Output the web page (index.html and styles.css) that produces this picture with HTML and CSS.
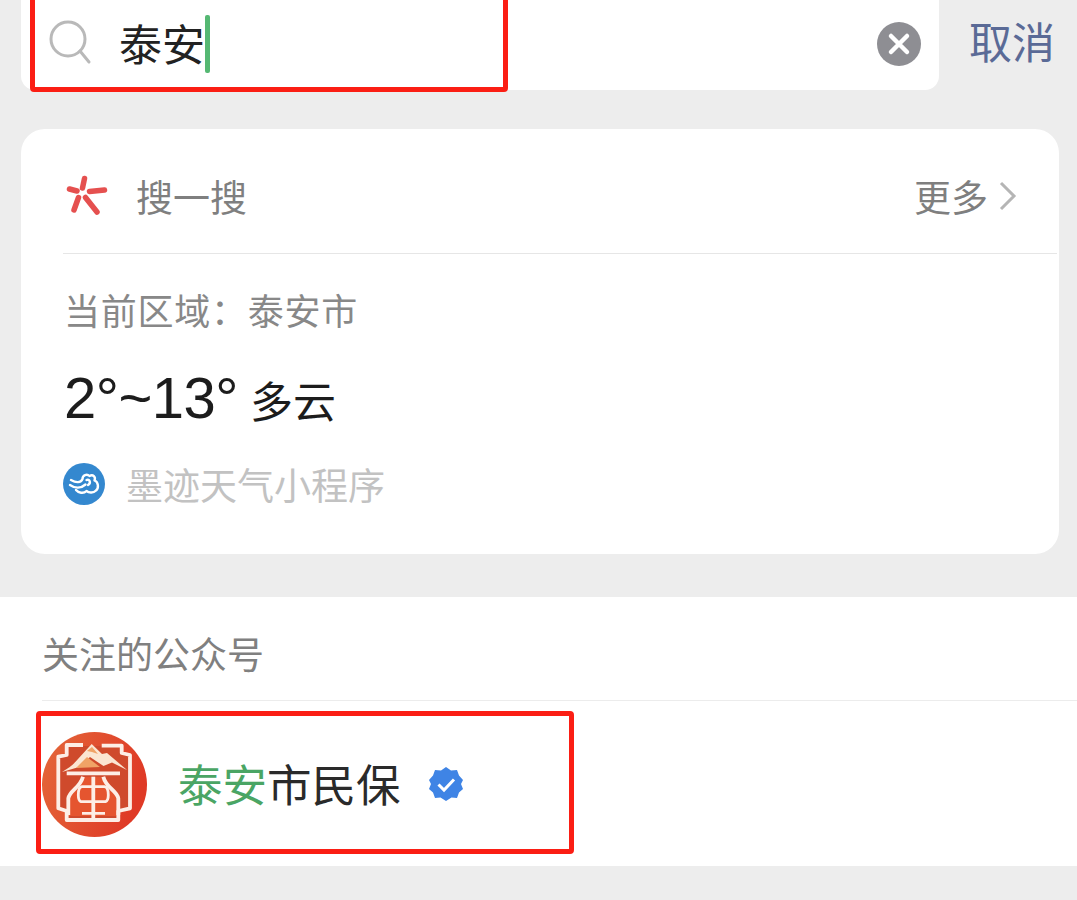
FILE: index.html
```html
<!DOCTYPE html>
<html lang="zh-CN">
<head>
<meta charset="utf-8">
<title>搜索</title>
<link rel="stylesheet" href="styles.css">
</head>
<body>
<div class="page">
  <header class="search-row">
    <div class="search-box">
      <svg class="search-icon" viewBox="0 0 46 46" width="46" height="46"><circle cx="22" cy="20" r="17" fill="none" stroke="#b9b9b9" stroke-width="3"/><path d="M34 32 L43 43" stroke="#b9b9b9" stroke-width="3" stroke-linecap="round"/></svg>
      <span class="query">泰安</span><span class="caret"></span>
      <svg class="clear-icon" viewBox="0 0 44 44" width="44" height="44"><circle cx="22" cy="22" r="22" fill="#8e8e93"/><path d="M14 14 L30 30 M30 14 L14 30" stroke="#fff" stroke-width="4.500" stroke-linecap="round"/></svg>
    </div>
    <span class="cancel">取消</span>
  </header>

  <section class="card">
    <div class="card-head">
      <svg class="sou-icon" viewBox="0 0 42 42" width="42" height="42"><g stroke="#e5504f" stroke-linecap="round" stroke-width="5.500"><path d="M18.500 3.500 L16.500 13"/><path d="M3.500 14 L11 16"/><path d="M23.500 16.500 L38.500 15"/><path d="M12.500 22.500 L8 35"/><path d="M19.500 22.500 L31 37"/></g></svg>
      <span class="card-title">搜一搜</span>
      <span class="more">更多</span>
      <svg class="chevron" viewBox="0 0 18 30" width="18" height="30"><path d="M2 2 L15 15 L2 28" fill="none" stroke="#b5b5b5" stroke-width="3"/></svg>
    </div>
    <div class="card-body">
      <div class="region">当前区域&#xFF1A;泰安市</div>
      <div class="weather"><span class="temp">2°~13°</span><span class="cond">多云</span></div>
      <div class="source">
        <svg class="moji-icon" viewBox="0 0 42 42" width="42" height="42"><circle cx="21" cy="21" r="21" fill="#3488cf"/><g fill="none" stroke="#fff" stroke-width="2.400" stroke-linecap="round" stroke-linejoin="round"><path d="M8 17 C13 20 18 20 19.500 16 C19.500 12 24 10.500 26.500 13 C30 11 33 14 31.500 17.500 C35.500 19 36 25 33 27.500 C30.500 30 26 30 23.500 28 C20.500 31 15.500 30 13 27"/><path d="M7 22 C12 25.500 18 25.500 22.500 21.500"/><path d="M23.500 17 C26.500 15.500 28.500 20 25 22"/></g></svg>
        <span class="source-name">墨迹天气小程序</span>
      </div>
    </div>
  </section>

  <section class="accounts">
    <div class="accounts-title">关注的公众号</div>
    <div class="account">
      <svg class="avatar" viewBox="0 0 105 105" width="105" height="105">
        <defs><linearGradient id="seal" x1="0" y1="0" x2="1" y2="0.300"><stop offset="0" stop-color="#e4683a"/><stop offset="1" stop-color="#df3a26"/></linearGradient></defs>
        <circle cx="52.500" cy="52.500" r="52.500" fill="url(#seal)"/>
        <path d="M25 14 H80 V22 L88 24 V76 L78 79 V88 H25 V79 L16 76 V25 L25 23 Z" fill="#cf4a2c"/>
        <path d="M41 45 H61 C64 55 72 60 76 67 V84 H26 V67 C31 60 38 55 41 45 Z" fill="#e5552f"/>
        <g fill="none" stroke="#fdeee6" stroke-width="3.800" stroke-linejoin="round">
          <path d="M41 13 H24.700 V23 L16.300 24.700 V76.300 L24.700 79 V88 H76.300 V79 L88 76.300 V23 L79.700 21 V13.700 H59.700"/>
          <path d="M24.700 41.300 H78"/>
          <path d="M41 44.700 C38 56 28 58 26.300 66.300 V83"/>
          <path d="M61.300 44.700 C64 56 74.500 58 76.300 66.300 V83"/>
          <path d="M51.300 44.700 V86"/>
        </g>
        <g fill="none" stroke="#fdeee6" stroke-width="2.800" stroke-linejoin="round">
          <path d="M51.300 54.700 H40 C37.500 55 36.300 59 36.300 63 C36.300 66 37 69 39 69.700 H51.300 M40 81.300 H51.300 M51.300 54.700 H62.500 C65 55 66.300 59 66.300 63 C66.300 66 65.500 69 63.500 69.700 H51.300 M51.300 81.300 H63"/>
        </g>
        <path d="M20 40 C27 36 32 32 36 27 L49.700 12 L60 22 L65 21 L85 38 L70 30.500 L61.500 34 L48 25 L37 35 Z" fill="#fbe6d2"/>
        <path d="M34 36 L45 25 L58 35 Z" fill="#f0a366"/>
        <path d="M45 19 L50 15 L56 22 L50 20 Z" fill="#f0a366"/>
      </svg>
      <div class="account-name"><em class="hit">泰安</em>市民保</div>
      <svg class="verified" viewBox="0 0 36 36" width="36" height="36"><path d="M18 1 L23 4.500 L29 4 L31 9.500 L35 14 L33 18 L35 23 L31 26.500 L29 32 L23.500 31.500 L18 35 L12.500 31.500 L7 32 L5 26.500 L1 23 L3 18 L1 14 L5 9.500 L7 4 L13 4.500 Z" fill="#3f84e5"/><path d="M10.500 18.500 L16 24 L26 13.500" fill="none" stroke="#fff" stroke-width="3"/></svg>
    </div>
  </section>
</div>
<div class="mark mark-search"></div>
<div class="mark mark-account"></div>
</body>
</html>
```
FILE: styles.css
```css
* { box-sizing: border-box; }
html, body { margin: 0; padding: 0; }
body {
  width: 1077px;
  height: 900px;
  overflow: hidden;
  position: relative;
  background: #ededed;
  font-family: "Noto Sans CJK SC", "Noto Sans", sans-serif;
}
.page { display: flex; flex-direction: column; }

.search-row { display: flex; align-items: stretch; height: 90px; padding-left: 21px; }
.search-box {
  width: 918px;
  background: #fff;
  border-radius: 0 0 14px 14px;
  display: flex;
  align-items: center;
  padding: 0 18px 2px 25px;
}
.search-icon { flex: none; margin-bottom: 4px; }
.query { margin-left: 27px; margin-bottom: 4px; font-size: 43px; line-height: 60px; color: #222; }
.caret { width: 5px; height: 58px; margin-left: 0; background: #55b873; border-radius: 2px; }
.clear-icon { flex: none; margin-left: auto; }
.cancel { margin-left: 30px; font-size: 43px; line-height: 80px; color: #5a6a96; }

.card {
  margin: 39px 18px 0 21px;
  height: 425px;
  background: #fff;
  border-radius: 24px;
  display: flex;
  flex-direction: column;
}
.card-head {
  height: 125px;
  margin: 0 2px 0 42px;
  padding: 10px 40px 0 0;
  border-bottom: 1px solid #e6e6e6;
  display: flex;
  align-items: center;
}
.sou-icon { flex: none; margin-left: 3px; }
.card-title { margin-left: 28px; font-size: 37px; color: #7f7f7f; }
.more { margin-left: auto; font-size: 37px; color: #7f7f7f; }
.chevron { flex: none; margin-left: 11px; }
.card-body { padding: 29px 0 0 43px; display: flex; flex-direction: column; }
.region { font-size: 36px; line-height: 52px; color: #888; letter-spacing: 0.750px; }
.weather { margin-top: 27px; display: flex; align-items: baseline; height: 72px; color: #1c1c1c; }
.temp { font-family: "Liberation Sans", sans-serif; font-size: 58px; line-height: 72px; letter-spacing: -0.500px; }
.cond { margin-left: 12px; font-size: 43px; }
.source { margin-top: 28px; display: flex; align-items: center; margin-left: -1px; }
.moji-icon { flex: none; }
.source-name { margin-left: 21px; font-size: 37px; line-height: 44px; color: #c2c2c2; }

.accounts { margin-top: 43px; height: 269px; background: #fff; padding-left: 42px; }
.accounts-title {
  height: 104px;
  border-bottom: 1px solid #ececec;
  padding-top: 28px;
  font-size: 37px;
  line-height: 56px;
  color: #808080;
}
.account { display: flex; align-items: center; padding-top: 31px; }
.avatar { flex: none; }
.account-name { margin-left: 31px; margin-bottom: 4px; font-size: 44.500px; line-height: 60px; color: #2a2a2a; white-space: nowrap; }
.hit { font-style: normal; color: #4aa564; }
.verified { flex: none; margin-left: 27px; margin-bottom: 2px; }

.mark { position: absolute; border: 5px solid #fb1e14; border-radius: 4px; }
.mark-search { left: 30px; top: -10px; width: 478px; height: 102px; }
.mark-account { left: 36px; top: 711px; width: 538px; height: 143px; }
```
